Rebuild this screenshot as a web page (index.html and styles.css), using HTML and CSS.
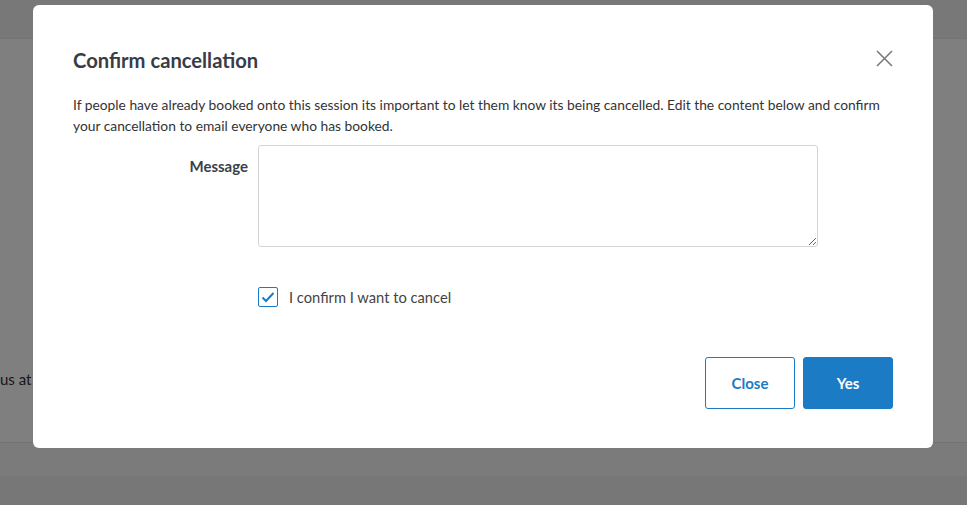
FILE: index.html
```html
<!DOCTYPE html>
<html lang="en">
<head>
    <meta charset="UTF-8">
    <meta name="viewport" content="width=device-width, initial-scale=1.0">
    <title>Confirm cancellation</title>
    <link rel="stylesheet" href="styles.css">
</head>
<body>
    <div class="page">
        <div class="page-header"></div>
        <div class="page-content">
            <p class="page-text">us at events@example.com</p>
        </div>
        <div class="page-footer"></div>
    </div>

    <div class="overlay">
        <div class="modal">
            <div class="modal-header">
                <h2>Confirm cancellation</h2>
                <button class="close-icon" type="button" aria-label="Close">
                    <svg width="17" height="17" viewBox="0 0 17 17">
                        <path d="M1 1 L16 16 M16 1 L1 16" stroke="#777" stroke-width="1.5" fill="none"/>
                    </svg>
                </button>
            </div>
            <p class="intro">If people have already booked onto this session its important to let them know its being cancelled. Edit the content below and confirm your cancellation to email everyone who has booked.</p>
            <form id="cancel-form">
                <div class="form-row">
                    <label class="field-label" for="message">Message</label>
                    <textarea id="message" name="message"></textarea>
                </div>
                <div class="form-row check-row">
                    <span></span>
                    <label class="check">
                        <span class="check-box">
                            <svg width="14" height="12" viewBox="0 0 14 12">
                                <path d="M1.5 6.5 L5 10 L12.5 2" stroke="#1b7bc4" stroke-width="2" fill="none"/>
                            </svg>
                        </span>
                        I confirm I want to cancel
                    </label>
                </div>
                <div class="actions">
                    <button type="button" class="btn btn-outline">Close</button>
                    <button type="submit" class="btn btn-primary">Yes</button>
                </div>
            </form>
        </div>
    </div>
</body>
</html>
```
FILE: styles.css
```css
body {
    font-family: Lato, "Open Sans", sans-serif;
    background-color: #fff;
    margin: 0;
    padding: 0;
    height: 100vh;
    overflow: hidden;
}
.page {
    display: flex;
    flex-direction: column;
    height: 100vh;
}
.page-header {
    height: 38px;
    background-color: #f0f0f0;
    border-bottom: 1px solid #e6e6e6;
}
.page-content {
    flex: 1;
    padding-top: 331px;
}
.page-text {
    margin: 0;
    font-size: 15px;
    color: #333;
}
.page-footer {
    height: 62px;
    background-color: #f6f6f6;
    border-top: 1px solid #e4e4e4;
    box-shadow: inset 0 -29px 0 #eee;
}
.overlay {
    position: fixed;
    inset: 0;
    background-color: rgba(0,0,0,0.5);
    display: flex;
    justify-content: flex-start;
    align-items: flex-start;
    padding: 5px 0 0 33px;
}
.modal {
    width: 900px;
    box-sizing: border-box;
    background-color: #fff;
    border-radius: 6px;
    padding: 44px 40px 39px 40px;
}
.modal-header {
    display: flex;
    justify-content: space-between;
    align-items: center;
}
h2 {
    margin: 0;
    font-size: 20.2px;
    line-height: 22px;
    font-weight: 700;
    color: #383c45;
}
.close-icon {
    background: none;
    border: none;
    padding: 0;
    margin-right: 0;
    margin-top: -4px;
    cursor: pointer;
    display: flex;
}
.intro {
    margin: 23px 0 9px 0;
    font-size: 13.8px;
    line-height: 21px;
    color: #333;
}
.form-row {
    display: grid;
    grid-template-columns: 175px 560px;
    column-gap: 10px;
}
.field-label {
    text-align: right;
    font-size: 15px;
    font-weight: 700;
    color: #3c4049;
    padding-top: 12px;
}
textarea {
    height: 102px;
    box-sizing: border-box;
    border: 1px solid #d4d4d4;
    border-radius: 3px;
    font-family: inherit;
    font-size: 14px;
}
.check-row {
    margin-top: 40px;
}
.check {
    display: flex;
    align-items: center;
    gap: 11px;
    font-size: 14.7px;
    color: #444;
}
.check-box {
    width: 20px;
    height: 20px;
    box-sizing: border-box;
    border: 1.5px solid #1b7bc4;
    border-radius: 2px;
    display: flex;
    align-items: center;
    justify-content: center;
}
.actions {
    display: flex;
    justify-content: flex-end;
    gap: 8px;
    margin-top: 50px;
}
.btn {
    width: 90px;
    height: 52px;
    border-radius: 3px;
    font-family: inherit;
    font-size: 15px;
    font-weight: 700;
    cursor: pointer;
}
.btn-outline {
    background-color: #fff;
    border: 1px solid #1b7bc4;
    color: #1b7bc4;
}
.btn-primary {
    background-color: #1b7bc4;
    border: 1px solid #1b7bc4;
    color: #fff;
}
```
